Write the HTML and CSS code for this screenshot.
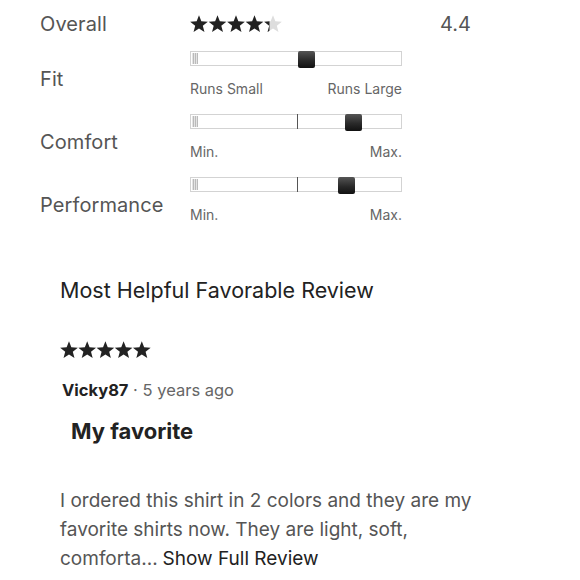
FILE: index.html
```html
<!DOCTYPE html>
<html>
<head>
<meta charset="utf-8">
<link rel="stylesheet" href="styles.css">
</head>
<body>
<div class="page">
  <div class="ratings">
    <div class="row overall">
      <div class="label">Overall</div>
      <div class="stars big">
        <svg width="92" height="18" viewBox="0 0 92 18">
          <defs>
            <path id="st" d="M9 0.2 L11.35 6.26 L17.85 6.63 L12.8 10.74 L14.47 17.02 L9 13.5 L3.53 17.02 L5.2 10.74 L0.15 6.63 L6.65 6.26 Z"/>
            <clipPath id="half"><rect x="73" y="0" width="6.5" height="18"/></clipPath>
          </defs>
          <use href="#st" x="0" fill="#222"/>
          <use href="#st" x="18.5" fill="#222"/>
          <use href="#st" x="37" fill="#222"/>
          <use href="#st" x="55.5" fill="#222"/>
          <use href="#st" x="74" fill="#ddd"/>
          <g clip-path="url(#half)"><use href="#st" x="74" fill="#222"/></g>
        </svg>
      </div>
      <div class="score">4.4</div>
    </div>
    <div class="row">
      <div class="label">Fit</div>
      <div class="scale">
        <div class="track"><span class="grip"></span><span class="thumb" style="left:51%"></span></div>
        <div class="ends"><span>Runs Small</span><span>Runs Large</span></div>
      </div>
    </div>
    <div class="row">
      <div class="label">Comfort</div>
      <div class="scale">
        <div class="track"><span class="grip"></span><span class="mid"></span><span class="thumb" style="left:73.5%"></span></div>
        <div class="ends"><span>Min.</span><span>Max.</span></div>
      </div>
    </div>
    <div class="row">
      <div class="label">Performance</div>
      <div class="scale">
        <div class="track"><span class="grip"></span><span class="mid"></span><span class="thumb" style="left:70%"></span></div>
        <div class="ends"><span>Min.</span><span>Max.</span></div>
      </div>
    </div>
  </div>

  <section class="review">
    <h2 class="review-title">Most Helpful Favorable Review</h2>
    <div class="stars five">
      <svg width="91" height="18" viewBox="0 0 91 18">
        <defs>
          <path id="st2" d="M9 0.2 L11.35 6.26 L17.85 6.63 L12.8 10.74 L14.47 17.02 L9 13.5 L3.53 17.02 L5.2 10.74 L0.15 6.63 L6.65 6.26 Z"/>
        </defs>
        <use href="#st2" x="0" fill="#222"/>
        <use href="#st2" x="18.2" fill="#222"/>
        <use href="#st2" x="36.4" fill="#222"/>
        <use href="#st2" x="54.6" fill="#222"/>
        <use href="#st2" x="72.8" fill="#222"/>
      </svg>
    </div>
    <div class="byline"><span class="author">Vicky87</span><span class="when"> · 5 years ago</span></div>
    <h3 class="headline">My favorite</h3>
    <p class="body">I ordered this shirt in 2 colors and they are my favorite shirts now. They are light, soft, comforta...<span class="more">Show Full Review</span></p>
  </section>
</div>
</body>
</html>
```
FILE: styles.css
```css
* { box-sizing: border-box; }
html, body { margin: 0; padding: 0; background: #fff; }
body { font-family: Inter, "Noto Sans", sans-serif; color: #222; }
.page { padding: 0 0 0 40px; }
.ratings { display: flex; flex-direction: column; margin-top: 6px; }
.row { display: grid; grid-template-columns: 150px 212px 1fr; align-items: start; height: 63px; }
.row.overall { height: 45px; padding-bottom: 9px; align-items: center; }
.label { font-size: 20px; color: #555; letter-spacing: 0.1px; }
.row .label { padding-top: 16px; }
.row.overall .label { padding-top: 0; }
.score { font-size: 20px; color: #555; padding-left: 38px; }
.stars svg { display: block; }
.scale { display: flex; flex-direction: column; }
.track { position: relative; height: 15px; border: 1px solid #d3d3d3; background: #fff; }
.grip { position: absolute; left: 1px; top: 1px; width: 6px; height: 11px; background: repeating-linear-gradient(90deg, #e4e4e4 0 1px, #bbb 1px 2px); }
.mid { position: absolute; left: 50.5%; top: -1px; width: 1px; height: 15px; background: #555; }
.thumb { position: absolute; top: -1px; width: 17px; height: 17px; background: linear-gradient(180deg, #555 0%, #2a2a2a 55%, #111 100%); border-radius: 2px; }
.ends { display: flex; justify-content: space-between; font-size: 14px; color: #666; margin-top: 14px; }
.review { padding: 35px 0 0 20px; }
.review-title { margin: 0; font-size: 21.5px; font-weight: 400; color: #222; line-height: 30px; }
.stars.five { margin-top: 36px; }
.byline { margin-top: 21px; font-size: 16.5px; padding-left: 2px; }
.author { font-weight: 700; color: #222; }
.when { color: #666; }
.headline { margin: 18px 0 0 11px; font-size: 22px; font-weight: 700; color: #222; }
.body { margin: 42px 0 0 0; font-size: 19px; line-height: 29px; color: #555; width: 430px; }
.more { color: #222; margin-left: 5px; }
```
